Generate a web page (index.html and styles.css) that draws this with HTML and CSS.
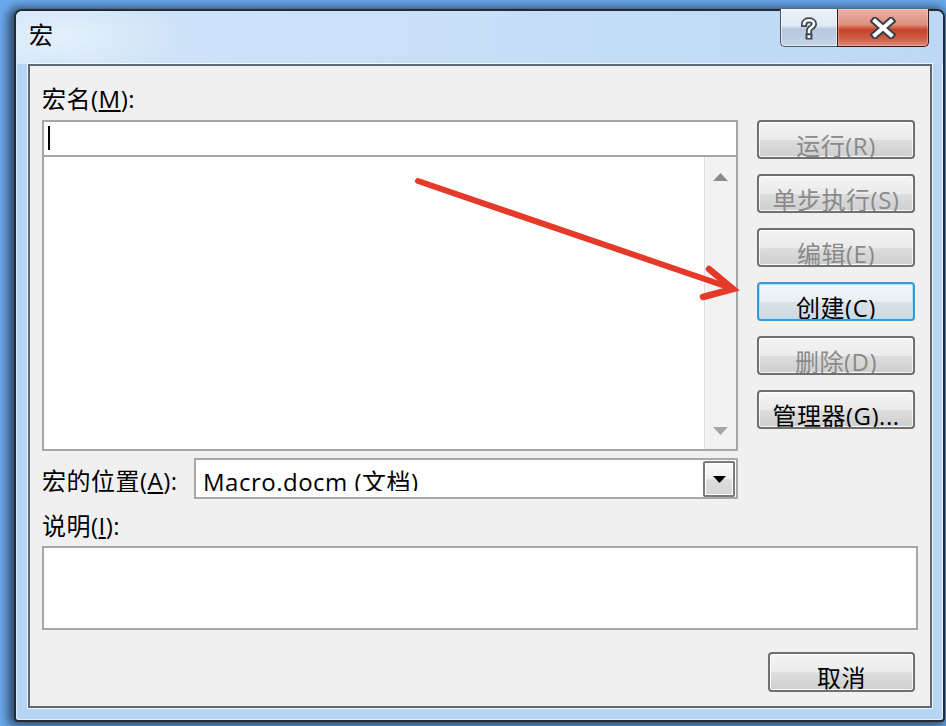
FILE: index.html
```html
<!DOCTYPE html>
<html lang="zh-CN">
<head>
<meta charset="utf-8">
<title>宏</title>
<link rel="stylesheet" href="styles.css">
</head>
<body>
<div class="desk">
  <div class="window">
    <div class="titlebar">
      <span class="title">宏</span>
      <div class="caption">
        <div class="cbtn help">
          <svg width="20" height="24" viewBox="0 0 20 24">
            <path d="M5 8 C5 3 15 3 15 8 C15 11.5 10 11.5 10 14.5 L10 16" fill="none" stroke="#3e4754" stroke-width="6" stroke-linecap="square"/>
            <rect x="6.5" y="17.5" width="7" height="6" fill="#3e4754"/>
            <path d="M5 8 C5 3 15 3 15 8 C15 11.5 10 11.5 10 14.5 L10 16" fill="none" stroke="#fff" stroke-width="2.6" stroke-linecap="square"/>
            <rect x="8.5" y="19.3" width="3" height="2.6" fill="#fff"/>
          </svg>
        </div>
        <div class="cbtn close">
          <svg width="26" height="22" viewBox="0 0 26 22">
            <path d="M5 4 L21 18 M21 4 L5 18" stroke="#3b3f4a" stroke-width="8" stroke-linecap="square"/>
            <path d="M5 4 L21 18 M21 4 L5 18" stroke="#fff" stroke-width="4" stroke-linecap="square"/>
          </svg>
        </div>
      </div>
    </div>
    <div class="panel">
      <div class="lbl lbl-name">宏名(<u>M</u>):</div>
      <div class="main">
        <div class="left">
          <div class="input"><span class="caret"></span></div>
          <div class="list">
            <div class="scroll">
              <svg width="15" height="8" viewBox="0 0 15 8"><polygon points="7.5,0 15,8 0,8" fill="#8c8c8c"/></svg>
              <svg width="15" height="8" viewBox="0 0 15 8"><polygon points="0,0 15,0 7.5,8" fill="#a6a6a6"/></svg>
            </div>
          </div>
          <div class="loc-row">
            <span class="lbl loc-lbl">宏的位置(<u>A</u>):</span>
            <div class="combo">
              <div class="combo-text"><span>Macro.docm (文档)</span></div>
              <div class="drop">
                <svg width="13" height="7" viewBox="0 0 13 7"><polygon points="0,0 13,0 6.5,7" fill="#000"/></svg>
              </div>
            </div>
          </div>
        </div>
        <div class="buttons">
          <div class="btn disabled">运行(R)</div>
          <div class="btn disabled">单步执行(S)</div>
          <div class="btn disabled">编辑(E)</div>
          <div class="btn default">创建(C)</div>
          <div class="btn disabled">删除(D)</div>
          <div class="btn">管理器(G)...</div>
        </div>
      </div>
      <div class="lbl lbl-desc">说明(<u>I</u>):</div>
      <div class="desc"></div>
      <div class="footer">
        <div class="btn cancel">取消</div>
      </div>
    </div>
  </div>
  <svg class="overlay" width="946" height="726" viewBox="0 0 946 726">
    <line x1="418" y1="181" x2="728" y2="287" stroke="#e5392a" stroke-width="6" stroke-linecap="round"/>
    <polyline points="709,269 733,289 703,297" fill="none" stroke="#e5392a" stroke-width="6.5" stroke-linejoin="miter" stroke-linecap="round"/>
  </svg>
</div>
</body>
</html>
```

FILE: styles.css
```css
html, body {
  margin: 0;
  padding: 0;
}

body {
  background: #6aa8ec;
  font-family: "Open Sans", "Noto Sans CJK SC", sans-serif;
  font-size: 24px;
  letter-spacing: 0.5px;
  color: #000;
}

.desk {
  position: relative;
  width: 946px;
  height: 726px;
  overflow: hidden;
}

.window {
  box-sizing: border-box;
  width: 931px;
  height: 713px;
  margin: 9px 0 0 14px;
  border: 2px solid #262b31;
  border-radius: 8px 8px 4px 4px;
  background: #b7d6f6;
  box-shadow: -3px 1px 10px 3px rgba(0, 0, 0, 0.55), inset 0 0 0 1px rgba(255, 255, 255, 0.6);
  display: flex;
  flex-direction: column;
}

.titlebar {
  height: 53px;
  display: flex;
  justify-content: space-between;
  align-items: flex-start;
  border-radius: 6px 6px 0 0;
  background:
    radial-gradient(ellipse 130px 45px at 45px 26px, rgba(255, 255, 255, 0.45), rgba(255, 255, 255, 0)),
    linear-gradient(90deg, #d0e4f8 0%, #c6def7 55%, #bcd8f6 100%);
}

.title {
  padding: 9px 0 0 13px;
  line-height: 30px;
}

.caption {
  display: flex;
  margin: -2px 14px 0 0;
}

.cbtn {
  box-sizing: border-box;
  height: 38px;
  display: flex;
  align-items: center;
  justify-content: center;
  border: 1px solid #4b5563;
  border-top: 0;
}

.help {
  width: 57px;
  border-right: 0;
  border-radius: 0 0 0 5px;
  background: linear-gradient(#eef3f9 0%, #dfe8f3 45%, #b5c8de 55%, #c3d4e8 100%);
  box-shadow: inset 0 0 0 1px rgba(255, 255, 255, 0.6);
}

.close {
  width: 92px;
  border-color: #40140e;
  border-radius: 0 0 5px 0;
  background: linear-gradient(#ebb1a6 0%, #de8f7f 42%, #c7412a 56%, #d2644e 85%, #de8c79 100%);
  box-shadow: inset 0 0 0 1px rgba(255, 220, 210, 0.35);
}

.panel {
  box-sizing: border-box;
  height: 644px;
  margin: 0 11px 0 12px;
  border: 2px solid #5e6874;
  background: #f0f0f0;
  padding: 0 12px;
  box-shadow: 0 0 0 1px rgba(255, 255, 255, 0.75);
  display: flex;
  flex-direction: column;
}

.lbl {
  line-height: 30px;
  white-space: nowrap;
}

.lbl-name {
  padding-top: 18px;
  margin-bottom: 6px;
}

.main {
  display: flex;
  gap: 19px;
}

.left {
  width: 696px;
}

.input {
  box-sizing: border-box;
  height: 37px;
  border: 2px solid #a6a6a6;
  background: #fff;
  padding: 4px 0 0 4px;
}

.caret {
  display: block;
  width: 2px;
  height: 24px;
  background: #000;
}

.list {
  box-sizing: border-box;
  height: 294px;
  border: 2px solid #a6a6a6;
  border-top: 0;
  background: #fff;
  display: flex;
  justify-content: flex-end;
}

.scroll {
  box-sizing: border-box;
  width: 32px;
  background: #f2f2f2;
  border-left: 1px solid #dcdcdc;
  box-shadow: inset 1px 0 0 #fafafa;
  display: flex;
  flex-direction: column;
  justify-content: space-between;
  align-items: center;
  padding: 16px 0 14px;
}

.loc-row {
  display: flex;
  align-items: center;
  margin-top: 7px;
  height: 41px;
}

.loc-lbl {
  width: 152px;
  padding-top: 4px;
}

.combo {
  flex: 1;
  box-sizing: border-box;
  height: 41px;
  border: 2px solid #a8a8a8;
  background: #fff;
  display: flex;
  padding-left: 7px;
}

.combo-text {
  flex: 1;
  height: 31px;
  overflow: hidden;
  white-space: nowrap;
}

.combo-text span {
  display: block;
  line-height: 43px;
}

.drop {
  box-sizing: border-box;
  width: 32px;
  height: 36px;
  margin: 1px 1px 0 0;
  border: 2px solid #7a7a7a;
  border-radius: 2px;
  background: linear-gradient(#fbfbfb 0%, #efefef 50%, #dedede 52%, #d3d3d3 100%);
  box-shadow: inset 0 0 0 1px #fff;
  display: flex;
  align-items: center;
  justify-content: center;
}

.buttons {
  width: 158px;
  margin-right: 3px;
  display: flex;
  flex-direction: column;
  gap: 15px;
}

.btn {
  box-sizing: border-box;
  height: 39px;
  border: 2px solid #707070;
  border-radius: 4px;
  background: linear-gradient(#f4f4f4 0%, #ebebeb 50%, #dddddd 52%, #cfcfcf 100%);
  box-shadow: inset 0 0 0 1px rgba(255, 255, 255, 0.85);
  text-align: center;
  line-height: 24px;
  padding-top: 12px;
  overflow: hidden;
  white-space: nowrap;
}

.btn.disabled {
  color: #8a8a8a;
}

.btn.default {
  border-color: #3c97d6;
  box-shadow: inset 0 0 0 1px #a8e3fa;
  background: linear-gradient(#f3f7fa 0%, #e9eff4 50%, #dae2e9 52%, #d0d9e1 100%);
}

.lbl-desc {
  margin-top: 12px;
}

.desc {
  box-sizing: border-box;
  height: 84px;
  margin-top: 5px;
  border: 2px solid #a6a6a6;
  background: #fff;
}

.footer {
  display: flex;
  justify-content: flex-end;
  margin-top: 22px;
  padding-right: 3px;
}

.btn.cancel {
  width: 147px;
  height: 40px;
}

.overlay {
  position: absolute;
  left: 0;
  top: 0;
  pointer-events: none;
}
```
